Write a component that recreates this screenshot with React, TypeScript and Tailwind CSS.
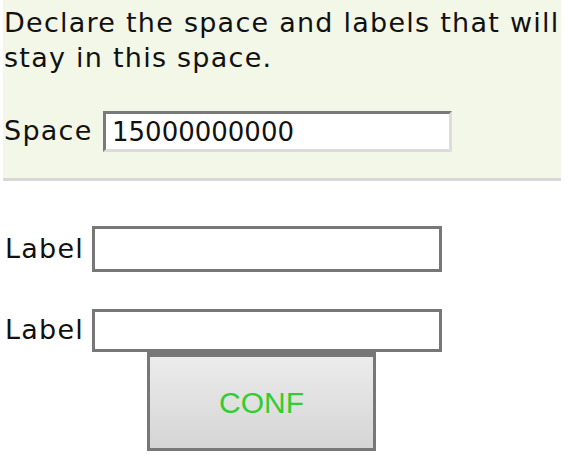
export default function App() {
  return (
    <div className="w-[570px] h-[471px] bg-white font-['DejaVu_Sans',sans-serif] text-[27px] text-[#111] tracking-[1.25px] overflow-hidden">
      <div className="ml-[3px] w-[558px] bg-[#f3f7e8] border-b-[3px] border-[#d8d8d8] pl-[1px] pt-[5px] pb-[26px]">
        <p className="leading-[35px] whitespace-nowrap">
          Declare the space and labels that will
          <br />
          stay in this space.
        </p>
        <div className="mt-[36px] flex items-center">
          <span className="w-[99px] shrink-0">Space</span>
          <input
            type="text"
            defaultValue="15000000000"
            className="w-[349px] h-[41px] bg-white border-[3px] border-t-[#7a7a7a] border-l-[#7a7a7a] border-r-[#dcdcdc] border-b-[#dcdcdc] px-[6px] text-[26px] tracking-normal text-[#111] outline-none font-['DejaVu_Sans',sans-serif]"
          />
        </div>
      </div>

      <div className="pl-[5px] pt-[45px]">
        <div className="flex items-center">
          <span className="w-[87px] shrink-0">Label</span>
          <input type="text" className="w-[350px] h-[46px] bg-white border-[3px] border-[#777] outline-none" />
        </div>
        <div className="mt-[37px] flex items-center">
          <span className="w-[87px] shrink-0">Label</span>
          <input type="text" className="w-[350px] h-[43px] bg-white border-[3px] border-[#777] outline-none" />
        </div>
        <button
          type="button"
          className="ml-[142px] w-[229px] h-[99px] border-[3px] border-t-[5px] border-[#777] bg-gradient-to-b from-[#ececec] to-[#d5d5d5] text-[#33cc33] text-[30px] tracking-normal font-['Liberation_Sans',sans-serif]"
        >
          CONF
        </button>
      </div>
    </div>
  );
}
